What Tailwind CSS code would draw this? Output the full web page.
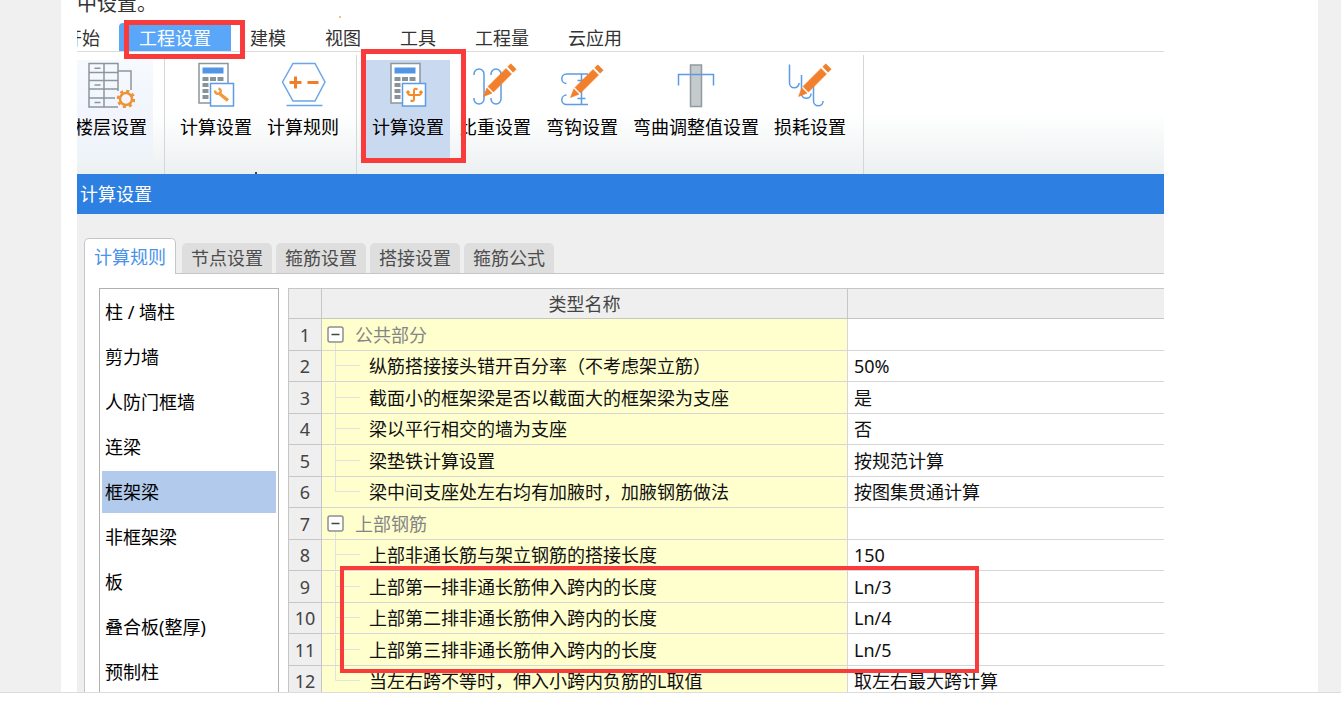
<!DOCTYPE html>
<html lang="zh-CN">
<head>
<meta charset="utf-8">
<meta name="viewport" content="width=device-width, initial-scale=1">
<title>计算设置</title>
<script src="https://cdn.jsdelivr.net/npm/@tailwindcss/browser@4"></script>
</head>
<body class="h-screen flex flex-col overflow-hidden bg-white text-[18px] leading-6 text-[#111] font-['Noto_Sans','Noto_Sans_CJK_SC',sans-serif]">

<!-- Shared symbols -->
<svg class="hidden" aria-hidden="true">
  <symbol id="pencil" viewBox="0 0 48 48"><path fill="#f27f2b" stroke="#f27f2b" stroke-width=".6" d="M12.500 36.500L15.800 28L21 33.200ZM17 26.500L35 8.500L40.500 14L22.500 32ZM36.800 6.800L39.800 3.800L45.200 9.200L42.200 12.200Z"/></symbol>
  <symbol id="calculator" viewBox="0 0 48 48">
    <rect x="7" y="3.500" width="29" height="39.500" fill="#fff" stroke="#8b969d" stroke-width="1.500"/>
    <path fill="#5196e6" d="M10.500 7.500h21v6h-21z"/>
    <path fill="#88939a" d="M10.500 17h6v4h-6zM18 17h6v4h-6zM25.500 17h6v4h-6zM10.500 23h6v4h-6zM10.500 29h6v4h-6zM10.500 35h6v4h-6z"/>
    <rect x="18.500" y="23.500" width="23" height="22.500" fill="#fff" stroke="#5b9cea" stroke-width="1.500"/>
  </symbol>
  <symbol id="group" viewBox="0 0 33 30"><path d="M13.500 23v7" stroke="#e2e2e2"/><rect x="6" y="7" width="15" height="15" rx="2" fill="#fff" stroke="#8e8e8e" stroke-width="1.500"/><path d="M9.500 14.500h8" stroke="#444" stroke-width="1.500"/></symbol>
  <symbol id="branch" viewBox="0 0 47 30"><path d="M13.500 0v30M13.500 14.500H38" fill="none" stroke="#e2e2e2"/></symbol>
  <symbol id="leaf" viewBox="0 0 47 30"><path d="M13.500 0v14.500H38" fill="none" stroke="#e2e2e2"/></symbol>
</svg>

<main class="flex-1 min-h-0 overflow-hidden bg-[#f0f0f0] pl-[61px] pr-[23px]">
  <article class="h-full bg-white pl-4 pr-[154px]">
    <div class="relative h-full flex flex-col">
      <p class="-mt-2 shrink-0 text-[20px] text-[#333]">中设置。</p>

      <!-- Ribbon tabs -->
      <nav class="h-9 shrink-0 flex items-end overflow-hidden border-b border-[#dcdcdc] text-[#333] whitespace-nowrap">
        <div class="flex gap-[39px] -ml-[13px]">
          <button class="h-7 pt-px">开始</button>
          <button class="h-7 pt-px px-5 -mx-5 bg-[#5aa6f8] text-white rounded-tl-sm">工程设置</button>
          <button class="h-7 pt-px">建模</button>
          <button class="h-7 pt-px">视图</button>
          <button class="h-7 pt-px">工具</button>
          <button class="h-7 pt-px">工程量</button>
          <button class="h-7 pt-px">云应用</button>
        </div>
      </nav>

      <!-- Ribbon tools -->
      <section class="h-[122px] shrink-0 overflow-hidden bg-linear-to-b from-white from-50% to-[#ecf0f1]">
        <div class="-ml-2 h-full flex whitespace-nowrap text-black">
          <button class="mt-2 h-[100px] px-[6px] flex flex-col items-center bg-linear-to-b from-[#f6f9fe] to-[#eef3fa]">
            <svg class="size-12" viewBox="0 0 48 48" fill="none" stroke="#8b969d" stroke-width="1.500">
              <path d="M31 31V3.500H2V47H31M17 3.500V47M2 12.500H31M2 20.500H31M2 29H31M2 38H28M31 11H44V30"/>
              <path d="M7.500 8.300h6M7.500 25h6M7.500 42.500h6"/>
              <circle cx="39" cy="39" r="6" stroke="#ec9338" stroke-width="2.500"/>
              <circle cx="39" cy="39" r="8" stroke="#ec9338" stroke-width="2.500" stroke-dasharray="3.140 3.140"/>
            </svg>
            <span class="leading-[38px]">楼层设置</span>
          </button>
          <div class="w-px mt-[3px] ml-[11px] mr-[9px] bg-[#d4d6d8]"></div>
          <button class="mt-2 h-[100px] px-[6px] flex flex-col items-center">
            <svg class="size-12" viewBox="0 0 48 48"><use href="#calculator"/>
              <path d="M28 34l8 6.500" stroke="#f09a3e" stroke-width="3.500"/>
              <path d="M26.500 28.500c3 1 3 4 .5 5.200-2 .6-4-.7-4-3.200" fill="none" stroke="#f09a3e" stroke-width="2.500"/>
            </svg>
            <span class="leading-[38px]">计算设置</span>
          </button>
          <button class="mt-2 ml-[3px] h-[100px] px-[6px] flex flex-col items-center">
            <svg class="size-12" viewBox="0 0 48 48" fill="none">
              <path d="M3.500 22L14 3.500H36L46 22L36 41H14ZM7.500 45.500H43.500" stroke="#6aa6ec" stroke-width="1.500"/>
              <path d="M10.500 22.500h12M16.500 16.500v12M28.500 22.500h11" stroke="#f07d28" stroke-width="3"/>
            </svg>
            <span class="leading-[38px]">计算规则</span>
          </button>
          <div class="w-px mt-[3px] ml-[11px] mr-[9px] bg-[#d4d6d8]"></div>
          <button class="mt-2 h-[100px] px-[6px] flex flex-col items-center bg-[#c9d9f0]">
            <svg class="size-12" viewBox="0 0 48 48"><use href="#calculator"/>
              <path d="M33.500 29.500q-3.500-2-3.500 1.500v8q0 3-3.500 1.500M24 31.500v1q0 2.500 2.500 2.500h8q2.500 0 2.500-2.500v-1M22.500 33l1.500-1.500 1.500 1.500M35.500 33l1.500-1.500 1.500 1.500" fill="none" stroke="#f58a26" stroke-width="2"/>
            </svg>
            <span class="leading-[38px]">计算设置</span>
          </button>
          <button class="mt-2 ml-[3px] h-[100px] px-[6px] flex flex-col items-center">
            <svg class="size-12" viewBox="0 0 48 48" fill="none">
              <path d="M3 15v-1a5 5 0 0 1 10 0v25a5 5 0 0 1-10 0v-1M20 15v-1a5 5 0 0 1 10 0v25a5 5 0 0 1-10 0v-1" stroke="#5b9ce4" stroke-width="1.500"/>
              <use href="#pencil"/>
            </svg>
            <span class="leading-[38px]">比重设置</span>
          </button>
          <button class="mt-2 ml-[3px] h-[100px] px-[6px] flex flex-col items-center">
            <svg class="size-12" viewBox="0 0 48 48" fill="none">
              <path d="M30 14H8.500a4.700 4.700 0 0 0 0 9.400M30 44.500H8.500a4.700 4.700 0 0 1 0-9.400M23.500 14v30.500M19.500 20.500h8M19.500 38.500h8" stroke="#5b9ce4" stroke-width="1.500"/>
              <use href="#pencil" y="1"/>
            </svg>
            <span class="leading-[38px]">弯钩设置</span>
          </button>
          <button class="mt-2 ml-[3px] h-[100px] px-[6px] flex flex-col items-center">
            <svg class="size-12" viewBox="0 0 48 48">
              <rect x="18.500" y="5" width="11" height="41.500" fill="#c5cacd" stroke="#909aa0" stroke-width="1.500"/>
              <path d="M6.500 25.500V14.500H41.500V25.500" fill="none" stroke="#5b9ce4" stroke-width="1.500"/>
            </svg>
            <span class="leading-[38px]">弯曲调整值设置</span>
          </button>
          <button class="mt-2 ml-[3px] h-[100px] px-[6px] flex flex-col items-center">
            <svg class="size-12" viewBox="0 0 48 48" fill="none">
              <path d="M3.500 4.500V23a4.800 4.800 0 0 0 9.600 0M15.500 15V33.500a4.800 4.800 0 0 0 9.600 0M27.500 26V41a4.800 4.800 0 0 0 9.600 0" stroke="#5b9ce4" stroke-width="1.500"/>
              <use href="#pencil"/>
            </svg>
            <span class="leading-[38px]">损耗设置</span>
          </button>
          <div class="w-px mt-[3px] ml-[11px] bg-[#d4d6d8]"></div>
        </div>
      </section>

      <!-- Dialog -->
      <h1 class="h-10 shrink-0 pl-[3px] leading-10 bg-[#2d7fe1] text-white">计算设置</h1>
      <section class="flex-1 min-h-0 flex flex-col bg-[#efefef] pt-6 pl-[7px]">
        <div class="h-[35px] shrink-0 flex items-end gap-1 text-[#4d4d4d] whitespace-nowrap" role="tablist">
          <button role="tab" aria-selected="true" class="relative z-10 w-[92px] h-9 mr-[2px] -mb-px bg-white border border-b-0 border-[#c4c7ca] rounded-t-[5px] text-[#4a92ea]">计算规则</button>
          <button role="tab" class="w-[90px] h-[30px] bg-[#dedede] rounded-t-[5px]">节点设置</button>
          <button role="tab" class="w-[90px] h-[30px] bg-[#dedede] rounded-t-[5px]">箍筋设置</button>
          <button role="tab" class="w-[90px] h-[30px] bg-[#dedede] rounded-t-[5px]">搭接设置</button>
          <button role="tab" class="w-[90px] h-[30px] bg-[#dedede] rounded-t-[5px]">箍筋公式</button>
        </div>
        <div class="flex-1 min-h-0 flex gap-[9px] bg-white border-l border-t border-[#c4c7ca] pl-[14px] pt-[14px]">
          <div class="w-[180px] shrink-0 flex flex-col gap-[3px] border border-b-0 border-[#b0b0b0] px-[2px] pt-[2px] overflow-hidden text-black">
            <button class="h-[42px] shrink-0 px-[3px] text-left">柱 / 墙柱</button>
            <button class="h-[42px] shrink-0 px-[3px] text-left">剪力墙</button>
            <button class="h-[42px] shrink-0 px-[3px] text-left">人防门框墙</button>
            <button class="h-[42px] shrink-0 px-[3px] text-left">连梁</button>
            <button class="h-[42px] shrink-0 px-[3px] text-left bg-[#b2cbec]">框架梁</button>
            <button class="h-[42px] shrink-0 px-[3px] text-left">非框架梁</button>
            <button class="h-[42px] shrink-0 px-[3px] text-left">板</button>
            <button class="h-[42px] shrink-0 px-[3px] text-left">叠合板(整厚)</button>
            <button class="h-[42px] shrink-0 px-[3px] text-left">预制柱</button>
          </div>
          <div class="flex-1 min-w-0 overflow-hidden">
            <table class="w-full table-fixed border-collapse border-l border-t border-[#c6c6c6] whitespace-nowrap [&_th]:border-r [&_th]:border-b [&_th]:border-[#c6c6c6] [&_th]:bg-[#efefef] [&_th]:font-normal [&_th]:text-[#444] [&_th]:p-0 [&_td]:p-0 [&_td]:border-b [&_td]:border-[#d6d6d6] [&_td:nth-child(2)]:bg-[#ffffce] [&_td:nth-child(2)]:border-r [&_td:nth-child(3)]:pl-[6px] [&_svg]:shrink-0 [&_svg]:h-[30px]">
              <colgroup><col class="w-[33px]"><col class="w-[526px]"><col></colgroup>
              <thead><tr class="h-[30px]"><th></th><th scope="col">类型名称</th><th class="border-r-0!"></th></tr></thead>
              <tbody class="[&_tr]:h-8 [&_tr:nth-child(even)]:h-[31px]">
                <tr><th scope="row">1</th><td><div class="flex items-center text-[#858585]"><svg class="w-[33px]"><use href="#group"/></svg>公共部分</div></td><td></td></tr>
                <tr><th scope="row">2</th><td><div class="flex items-center"><svg class="w-[47px]"><use href="#branch"/></svg>纵筋搭接接头错开百分率（不考虑架立筋）</div></td><td>50%</td></tr>
                <tr><th scope="row">3</th><td><div class="flex items-center"><svg class="w-[47px]"><use href="#branch"/></svg>截面小的框架梁是否以截面大的框架梁为支座</div></td><td>是</td></tr>
                <tr><th scope="row">4</th><td><div class="flex items-center"><svg class="w-[47px]"><use href="#branch"/></svg>梁以平行相交的墙为支座</div></td><td>否</td></tr>
                <tr><th scope="row">5</th><td><div class="flex items-center"><svg class="w-[47px]"><use href="#branch"/></svg>梁垫铁计算设置</div></td><td>按规范计算</td></tr>
                <tr><th scope="row">6</th><td><div class="flex items-center"><svg class="w-[47px]"><use href="#leaf"/></svg>梁中间支座处左右均有加腋时，加腋钢筋做法</div></td><td>按图集贯通计算</td></tr>
                <tr><th scope="row">7</th><td><div class="flex items-center text-[#858585]"><svg class="w-[33px]"><use href="#group"/></svg>上部钢筋</div></td><td></td></tr>
                <tr><th scope="row">8</th><td><div class="flex items-center"><svg class="w-[47px]"><use href="#branch"/></svg>上部非通长筋与架立钢筋的搭接长度</div></td><td>150</td></tr>
                <tr><th scope="row">9</th><td><div class="flex items-center"><svg class="w-[47px]"><use href="#branch"/></svg>上部第一排非通长筋伸入跨内的长度</div></td><td>Ln/3</td></tr>
                <tr><th scope="row">10</th><td><div class="flex items-center"><svg class="w-[47px]"><use href="#branch"/></svg>上部第二排非通长筋伸入跨内的长度</div></td><td>Ln/4</td></tr>
                <tr><th scope="row">11</th><td><div class="flex items-center"><svg class="w-[47px]"><use href="#branch"/></svg>上部第三排非通长筋伸入跨内的长度</div></td><td>Ln/5</td></tr>
                <tr><th scope="row">12</th><td><div class="flex items-center"><svg class="w-[47px]"><use href="#leaf"/></svg>当左右跨不等时，伸入小跨内负筋的L取值</div></td><td>取左右最大跨计算</td></tr>
              </tbody>
            </table>
          </div>
        </div>
      </section>

      <!-- Highlight frames -->
      <div class="pointer-events-none absolute z-20 left-[47px] top-5 w-[121px] h-[39px] border-5 border-[#fa3b3b]"></div>
      <div class="pointer-events-none absolute z-20 left-[284px] top-[49px] w-[105px] h-[114px] border-5 border-[#fa3b3b]"></div>
      <div class="pointer-events-none absolute z-20 left-[263px] top-[566px] w-[639px] h-[107px] border-4 border-[#fa3b3b]"></div>
      <div class="pointer-events-none absolute left-[262px] top-4 size-[2px] bg-[#f5c08a]"></div>
      <div class="pointer-events-none absolute left-[178px] top-[172px] size-[2px] bg-[#444]"></div>
    </div>
  </article>
</main>
<footer class="h-3 shrink-0 bg-white border-t border-[#dcdcdc]"></footer>
</body>
</html>
